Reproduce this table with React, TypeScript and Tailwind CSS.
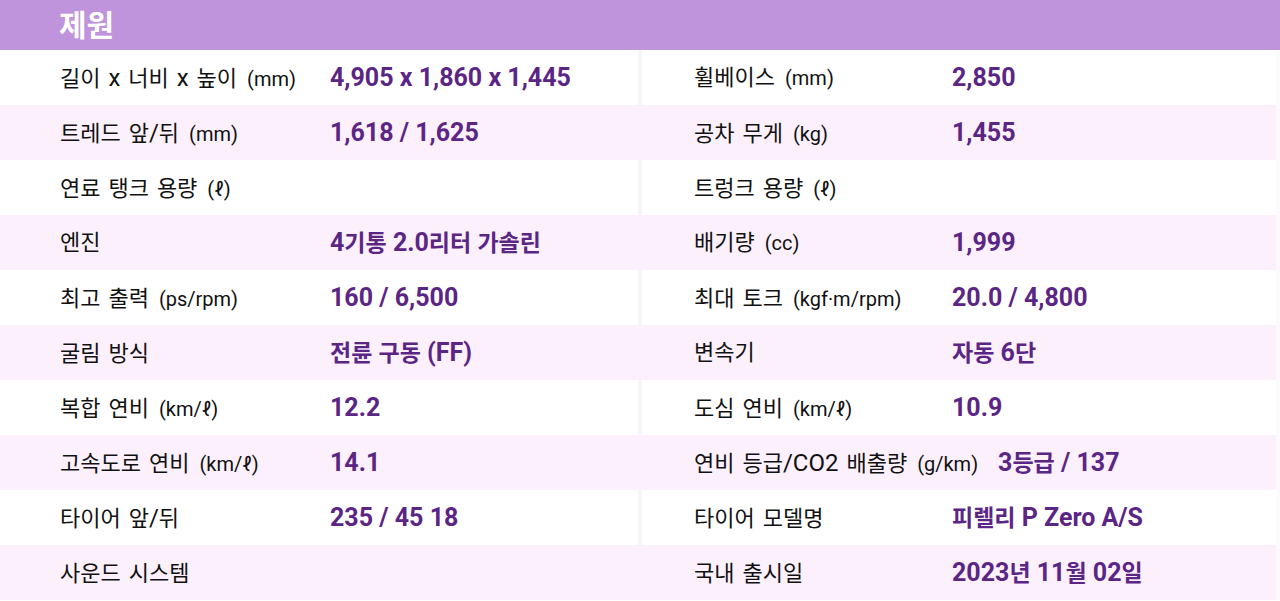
import React from "react";

type Spec = { label: string; unit?: string; value?: string };

const rows: [Spec, Spec][] = [
  [
    { label: "길이 x 너비 x 높이", unit: "(mm)", value: "4,905 x 1,860 x 1,445" },
    { label: "휠베이스", unit: "(mm)", value: "2,850" },
  ],
  [
    { label: "트레드 앞/뒤", unit: "(mm)", value: "1,618 / 1,625" },
    { label: "공차 무게", unit: "(kg)", value: "1,455" },
  ],
  [
    { label: "연료 탱크 용량", unit: "(ℓ)" },
    { label: "트렁크 용량", unit: "(ℓ)" },
  ],
  [
    { label: "엔진", value: "4기통 2.0리터 가솔린" },
    { label: "배기량", unit: "(cc)", value: "1,999" },
  ],
  [
    { label: "최고 출력", unit: "(ps/rpm)", value: "160 / 6,500" },
    { label: "최대 토크", unit: "(kgf·m/rpm)", value: "20.0 / 4,800" },
  ],
  [
    { label: "굴림 방식", value: "전륜 구동 (FF)" },
    { label: "변속기", value: "자동 6단" },
  ],
  [
    { label: "복합 연비", unit: "(km/ℓ)", value: "12.2" },
    { label: "도심 연비", unit: "(km/ℓ)", value: "10.9" },
  ],
  [
    { label: "고속도로 연비", unit: "(km/ℓ)", value: "14.1" },
    { label: "연비 등급/CO2 배출량", unit: "(g/km)", value: "3등급 / 137" },
  ],
  [
    { label: "타이어 앞/뒤", value: "235 / 45 18" },
    { label: "타이어 모델명", value: "피렐리 P Zero A/S" },
  ],
  [
    { label: "사운드 시스템" },
    { label: "국내 출시일", value: "2023년 11월 02일" },
  ],
];

// Hangul runs come out a touch smaller than the latin/digit runs
function Mixed({ text, hangul, latin }: { text: string; hangul: string; latin: string }) {
  const parts = text.split(/([가-힣]+)/);
  return (
    <>
      {parts.map((p, i) =>
        p === "" ? null : (
          <span key={i} className={i % 2 === 1 ? hangul : latin}>
            {p}
          </span>
        ),
      )}
    </>
  );
}

function Cell({ spec, left }: { spec: Spec; left: boolean }) {
  return (
    <div className={`flex items-center h-full ${left ? "pl-[60px]" : "pl-[52px]"}`}>
      <div
        className={`shrink-0 pr-5 text-[#111111] whitespace-nowrap [word-spacing:2px] ${
          left ? "min-w-[270px]" : "min-w-[258px]"
        }`}
      >
        <Mixed text={spec.label} hangul="text-[22px]" latin="text-[24px]" />
        {spec.unit && <span className="ml-[10px] text-[20px]">{spec.unit}</span>}
      </div>
      {spec.value && (
        <div className="font-bold text-[#5b2585] whitespace-nowrap">
          <Mixed text={spec.value} hangul="text-[23px]" latin="text-[25px]" />
        </div>
      )}
    </div>
  );
}

export default function App() {
  return (
    <div
      className="w-[1280px] h-[601px] overflow-hidden bg-white"
      style={{ fontFamily: "Roboto, 'Noto Sans CJK KR', sans-serif" }}
    >
      {/* Header */}
      <div className="h-[50px] bg-[#c093dd] flex items-center pl-[59px] pt-[1px]">
        <h2 className="text-[30px] font-bold text-white leading-none">제원</h2>
      </div>

      {/* Spec rows */}
      {rows.map(([a, b], i) => {
        const pink = i % 2 === 1;
        return (
          <div
            key={i}
            className={`grid grid-cols-[638px_4px_1fr_4px] h-[55px] ${
              pink ? "bg-[#fbf0fb]" : "bg-white"
            }`}
          >
            <Cell spec={a} left />
            <div className={pink ? "bg-[#fbf0fb]" : "bg-[#f7f5fa]"} />
            <Cell spec={b} left={false} />
            <div className={pink ? "bg-[#fdfafd]" : "bg-[#fbfafc]"} />
          </div>
        );
      })}
    </div>
  );
}
